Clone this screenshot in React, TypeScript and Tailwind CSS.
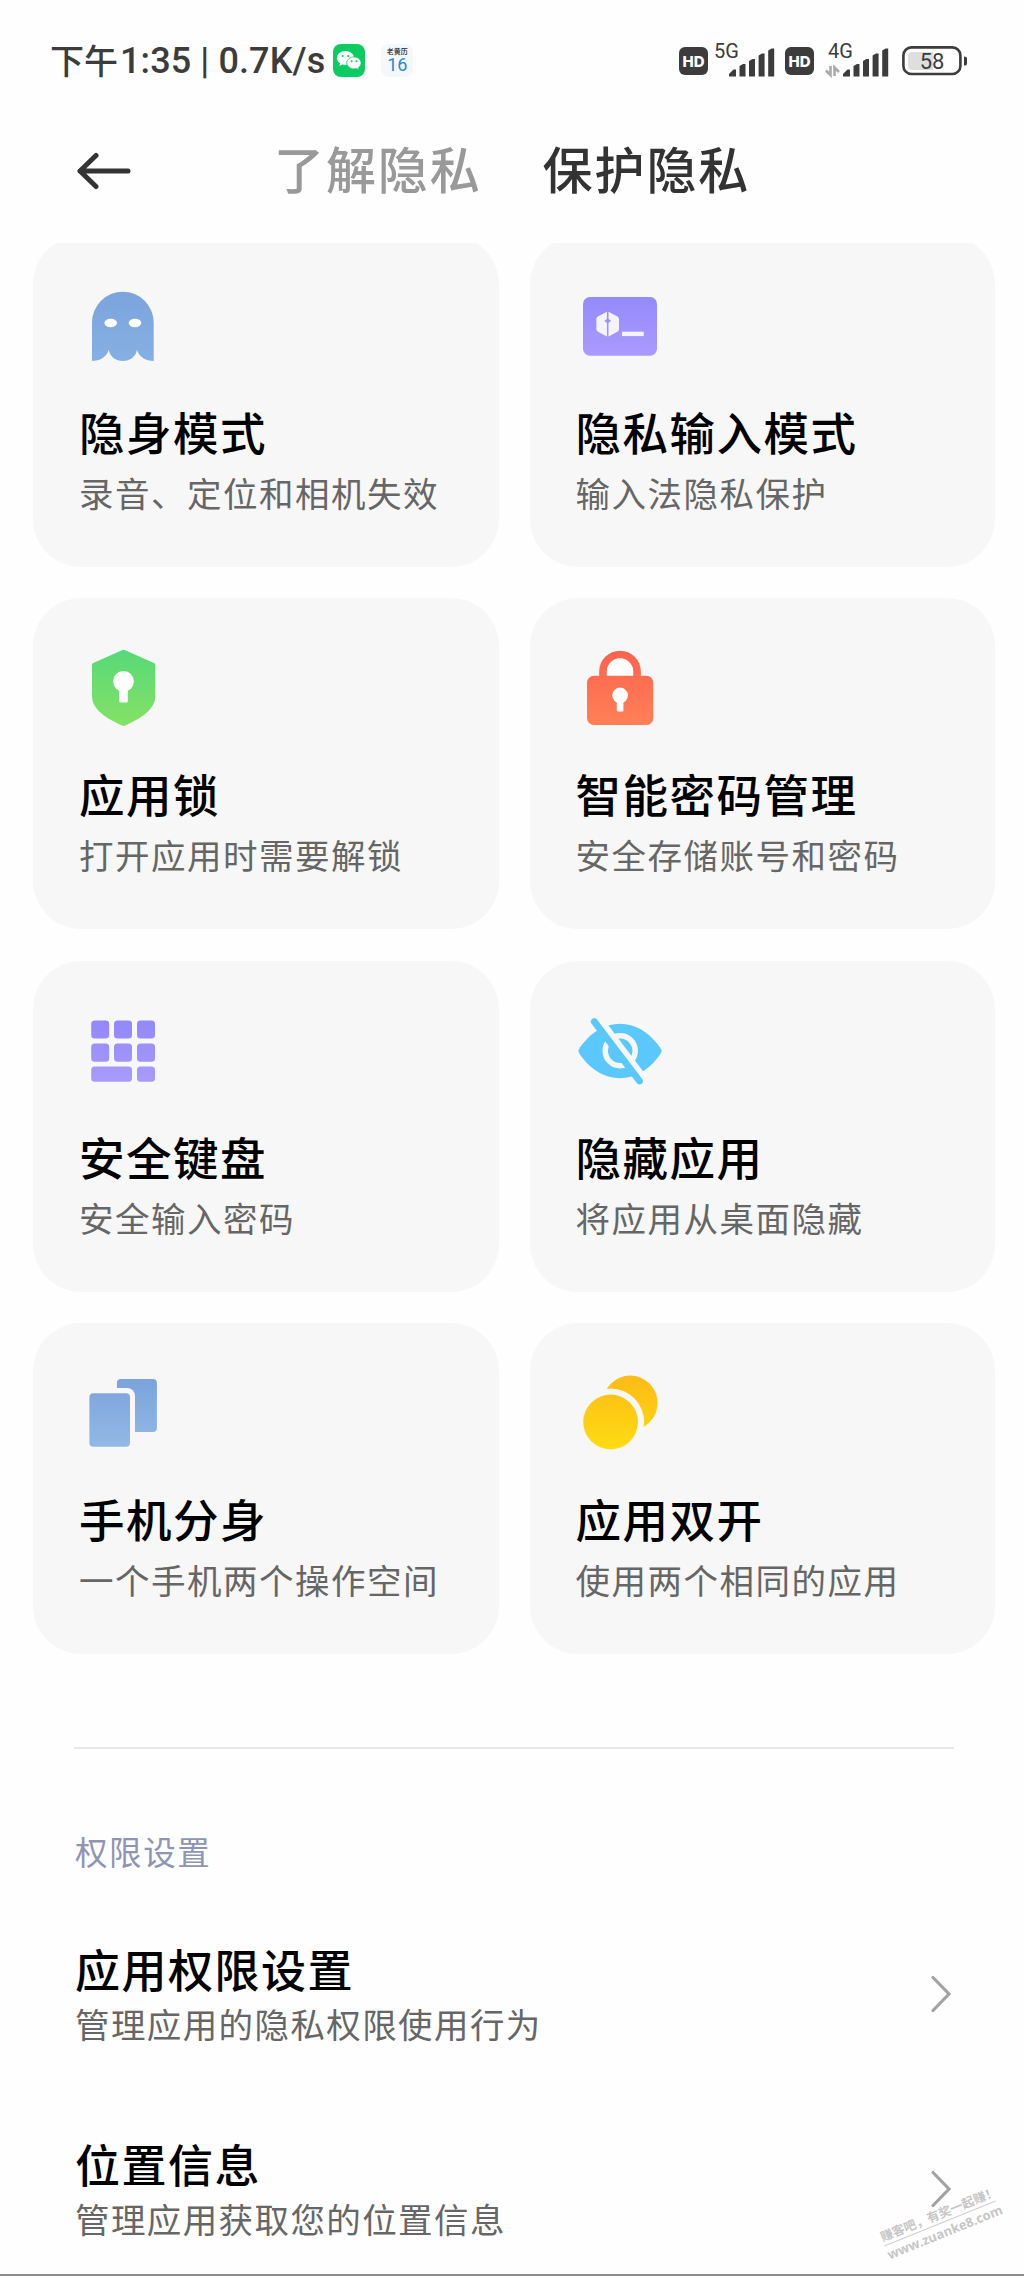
import type { ReactNode } from 'react';

const CARD_BG = '#f7f7f7';

function Gradient({ id, from, to }: { id: string; from: string; to: string }) {
  return (
    <linearGradient id={id} x1="0" y1="12" x2="0" y2="86" gradientUnits="userSpaceOnUse">
      <stop offset="0" stopColor={from} />
      <stop offset="1" stopColor={to} />
    </linearGradient>
  );
}

function CardIcon({ children }: { children: ReactNode }) {
  return (
    <svg width="100" height="100" viewBox="0 0 100 100" className="ml-3 block">
      {children}
    </svg>
  );
}

function GhostIcon() {
  return (
    <CardIcon>
      <Gradient id="ghost" from="#7ba3dd" to="#86b0e2" />
      <path
        d="M14 85V46.500a30.850 30.850 0 0 1 61.700 0V85c-8 0-14-3.500-16.700-11c-1.500 7-7 11-14.100 11s-12.700-4-14.200-11c-2.700 7.500-8.700 11-16.700 11z"
        fill="url(#ghost)"
      />
      <ellipse cx="32.700" cy="47" rx="6.300" ry="4.200" fill="#fff" />
      <ellipse cx="57" cy="47" rx="6.300" ry="4.200" fill="#fff" />
    </CardIcon>
  );
}

function PrivateInputIcon() {
  return (
    <CardIcon>
      <Gradient id="input" from="#9188fb" to="#ad9bff" />
      <rect x="8" y="21" width="74" height="58.700" rx="7" fill="url(#input)" />
      <path d="M31.900 35.700L23.300 40.200Q21.300 41.200 21.300 43V53.300Q21.300 55.100 23.300 56.100L31.900 60.500V47L29.300 44.700L31.900 43z" fill="#f5f3ff" />
      <path d="M33.500 35.700L42 40.200Q44 41.200 44 43V53.300Q44 55.100 42 56.100L33.500 60.500V47L36.100 44.700L33.500 43z" fill="#f5f3ff" />
      <rect x="47" y="55.700" width="21.700" height="4.400" fill="#f5f3ff" />
    </CardIcon>
  );
}

function ShieldIcon() {
  return (
    <CardIcon>
      <Gradient id="shield" from="#57d978" to="#84e166" />
      <path
        d="M44 12.200Q45.600 11.400 47.200 12.200L76 25Q77.300 25.600 77.300 27V58C77.300 71 64 80 47.300 87.400Q45.600 88.200 43.900 87.400C27.300 80 14 71 14 58V27Q14 25.600 15.300 25z"
        fill="url(#shield)"
      />
      <circle cx="45.500" cy="43.300" r="10.400" fill="#fff" />
      <rect x="41.200" y="48" width="8.600" height="16.600" rx="1.500" fill="#fff" />
    </CardIcon>
  );
}

function LockIcon() {
  return (
    <CardIcon>
      <Gradient id="lock" from="#fd624e" to="#ff8056" />
      <path d="M28 42V33.500a17 17 0 0 1 34 0V42" fill="none" stroke="url(#lock)" strokeWidth="7.700" />
      <path d="M31.850 37.700V33.700a13.150 13.150 0 0 1 26.300 0V37.700z" fill="#fff" />
      <rect x="12" y="37.700" width="66.300" height="49.400" rx="7" fill="url(#lock)" />
      <circle cx="45.100" cy="57.400" r="7.800" fill="#fff" />
      <rect x="41.800" y="60" width="6.600" height="13.500" rx="1" fill="#fff" />
    </CardIcon>
  );
}

function KeypadIcon() {
  return (
    <CardIcon>
      <Gradient id="keypad" from="#9085fa" to="#aa9cfd" />
      <g fill="url(#keypad)">
        {[19.4, 42.5].map((y) =>
          [13.2, 36, 59].map((x) => (
            <rect key={`${x}-${y}`} x={x} y={y} width="18" height="18.200" rx="3.500" />
          ))
        )}
        <rect x="13.200" y="65.500" width="40.800" height="15.200" rx="3.500" />
        <rect x="59" y="65.500" width="18" height="15.200" rx="3.500" />
      </g>
    </CardIcon>
  );
}

function HiddenIcon() {
  return (
    <CardIcon>
      <path
        d="M3.300 49.800Q4 46.500 8 42.500C17 31 30 22.700 45 22.700S73 31 82 42.500Q86 46.500 86.700 49.800Q86 53 82 57.500C73 69 60 77.200 45 77.200S17 69 8 57.500Q4 53 3.300 49.800z"
        fill="#5ac8fd"
      />
      <circle cx="45.200" cy="49.800" r="15" fill="none" stroke={CARD_BG} strokeWidth="5.500" />
      <path d="M23 15.500L72 80.500" stroke={CARD_BG} strokeWidth="6" />
      <path d="M19.300 20.600L64.500 80" stroke="#5ac8fd" strokeWidth="6.800" strokeLinecap="round" />
    </CardIcon>
  );
}

function CloneIcon() {
  return (
    <CardIcon>
      <Gradient id="clone" from="#7aa2dc" to="#93b9e4" />
      <rect x="38.900" y="16" width="40" height="53" rx="4" fill="url(#clone)" />
      <rect x="6" y="25" width="51" height="64" rx="8" fill={CARD_BG} />
      <rect x="11.400" y="30.300" width="40.600" height="53.400" rx="4" fill="url(#clone)" />
    </CardIcon>
  );
}

function DualAppIcon() {
  return (
    <CardIcon>
      <Gradient id="dual" from="#fdba16" to="#fddc12" />
      <circle cx="55.200" cy="40" r="27.400" fill="url(#dual)" />
      <circle cx="35.600" cy="59" r="33.500" fill={CARD_BG} />
      <circle cx="35.600" cy="59" r="27.400" fill="url(#dual)" />
    </CardIcon>
  );
}

const features = [
  { title: '隐身模式', desc: '录音、定位和相机失效', icon: <GhostIcon /> },
  { title: '隐私输入模式', desc: '输入法隐私保护', icon: <PrivateInputIcon /> },
  { title: '应用锁', desc: '打开应用时需要解锁', icon: <ShieldIcon /> },
  { title: '智能密码管理', desc: '安全存储账号和密码', icon: <LockIcon /> },
  { title: '安全键盘', desc: '安全输入密码', icon: <KeypadIcon /> },
  { title: '隐藏应用', desc: '将应用从桌面隐藏', icon: <HiddenIcon /> },
  { title: '手机分身', desc: '一个手机两个操作空间', icon: <CloneIcon /> },
  { title: '应用双开', desc: '使用两个相同的应用', icon: <DualAppIcon /> },
];

const settings = [
  { title: '应用权限设置', desc: '管理应用的隐私权限使用行为' },
  { title: '位置信息', desc: '管理应用获取您的位置信息' },
];

function WechatIcon() {
  return (
    <svg width="32" height="33" viewBox="0 0 32 33" className="ml-[8px]">
      <rect width="32" height="33" rx="8" fill="#0bcb61" />
      <path d="M12.500 7C7.700 7 4 10 4 13.900c0 2.200 1.200 4.100 3 5.400l-.8 2.700 3.200-1.600c1 .3 2 .4 3.100.4 4.800 0 8.500-3 8.500-6.900S17.300 7 12.500 7z" fill="#fff" />
      <path d="M21 12.900c-4 0-7.200 2.700-7.200 6s3.200 6 7.200 6c.9 0 1.800-.1 2.600-.4l2.500 1.400-.6-2.300c1.600-1.100 2.600-2.800 2.600-4.700 0-3.300-3.100-6-7.100-6z" fill="#fff" stroke="#0bcb61" strokeWidth=".8" />
      <g fill="#0bcb61">
        <circle cx="9.700" cy="12" r="1.100" />
        <circle cx="15.300" cy="12" r="1.100" />
        <circle cx="18.700" cy="17.300" r="1" />
        <circle cx="23.400" cy="17.300" r="1" />
      </g>
    </svg>
  );
}

function HdBadge() {
  return (
    <svg width="29" height="28" viewBox="0 0 29 28">
      <rect width="29" height="28" rx="6" fill="#3c3c3c" />
      <text x="14.500" y="19.500" textAnchor="middle" fontSize="15" fontWeight="800" fontFamily="Inter, sans-serif" textLength="22" fill="#fff">
        HD
      </text>
    </svg>
  );
}

function Signal({ label, data }: { label: string; data?: boolean }) {
  return (
    <svg width="64" height="38" viewBox="0 -2 64 38" className="overflow-visible">
      <text x={data ? 3 : 0} y="16" fontSize="20" fontFamily="Roboto, sans-serif" fill="#3c3c3c">
        {label}
      </text>
      {data && (
        <path d="M1 28.500L5.500 33V24M9.500 34V25.500L14 30" fill="none" stroke="#aaa" strokeWidth="2.600" />
      )}
      <g fill="#3c3c3c" transform={data ? undefined : 'translate(-3 0)'}>
        <path d="M18 34.500V32L22.500 27.500H25V34.500z" />
        <path d="M28.500 34.500V24L32 22H34.500V34.500z" />
        <path d="M38 34.500V19L41.500 17H44V34.500z" />
        <path d="M47.600 34.500V13.500L51 11.500H53.600V34.500z" />
        <path d="M57.200 34.500V8.500L60.700 6.500H63.200V34.500z" />
      </g>
    </svg>
  );
}

function Battery() {
  return (
    <svg width="66" height="30" viewBox="0 0 66 30">
      <rect x="1.400" y="1.400" width="57" height="26.600" rx="8" fill="none" stroke="#3c3c3c" strokeWidth="2.600" />
      <path d="M10 6H31V24H10Q6 24 6 20V10Q6 6 10 6z" fill="#dedede" />
      <path d="M62 10.500Q65 10.500 65 12.500V17.500Q65 19.500 62 19.500z" fill="#3c3c3c" />
      <text x="30" y="22.500" textAnchor="middle" fontSize="22" fontFamily="Roboto, sans-serif" fill="#3c3c3c">
        58
      </text>
    </svg>
  );
}

function StatusBar() {
  return (
    <div className="flex h-[121px] items-center justify-between pl-[50px] pr-[56px] text-[#3c3c3c]">
      <div className="flex items-center">
        <span className="-mt-[2px] text-[34px] font-medium leading-none">下午</span>
        <span className="ml-[2px] whitespace-pre font-[Roboto] text-[36px] font-medium leading-none tracking-[0.100px]">1:35 | 0.7K/s</span>
        <WechatIcon />
        <div className="ml-[16px] flex h-[33px] w-[32px] flex-col items-center rounded-lg bg-[#f3f8fb] pt-[3px] leading-none">
          <span className="text-[7px] font-medium leading-[9px] text-[#222]">老黄历</span>
          <span className="font-[Roboto] text-[18px] leading-[17px] text-[#2a8ccc]">16</span>
        </div>
      </div>
      <div className="flex items-center">
        <HdBadge />
        <div className="-mt-[4px] ml-[6px]">
          <Signal label="5G" />
        </div>
        <div className="ml-[7px]">
          <HdBadge />
        </div>
        <div className="-mt-[4px] ml-[11px]">
          <Signal label="4G" data />
        </div>
        <div className="ml-[13px]">
          <Battery />
        </div>
      </div>
    </div>
  );
}

function Header() {
  return (
    <header className="flex h-[122px] items-start pl-[77px] pt-[14px]">
      <svg width="54" height="38" viewBox="0 0 54 38" className="mt-[17px]" fill="none" stroke="#333" strokeWidth="5" strokeLinecap="round" strokeLinejoin="round">
        <path d="M51 19H3M19 3.500L3 19L19 34.500" />
      </svg>
      <nav className="ml-[143px] flex gap-[61px] text-[50px] font-medium leading-[64px] tracking-[1.900px]">
        <span className="text-[#999]">了解隐私</span>
        <span className="text-[#333]">保护隐私</span>
      </nav>
    </header>
  );
}

export default function App() {
  return (
    <div className="flex h-[2276px] w-[1024px] flex-col overflow-hidden border-b-2 border-[#8d8d8d] bg-[#fefefe] font-['Noto_Sans_CJK_SC',sans-serif]">
      <StatusBar />
      <Header />

      <main className="relative flex-1 overflow-hidden">
        <div className="-mt-[7px] grid grid-cols-2 gap-x-[31px] gap-y-[31.300px] pl-[33px] pr-[29px]">
          {features.map((item) => (
            <section key={item.title} className="h-[331px] rounded-[48px] bg-[#f7f7f7] pl-[33px] pt-10">
              {item.icon}
              <div className="pl-[13px]">
                <h2 className="mt-[25px] text-[45.500px] font-medium leading-[60px] tracking-[1.500px] text-black">{item.title}</h2>
                <p className="mt-[9px] text-[34.500px] leading-[44px] tracking-[1.500px] text-[#666]">{item.desc}</p>
              </div>
            </section>
          ))}
        </div>

        <div className="ml-[74px] mr-[70px] mt-[93px] h-[2px] bg-[#e8e8e8]" />

        <h3 className="ml-[75px] mt-[80px] text-[32.500px] leading-[44px] tracking-[1.600px] text-[#8f94b2]">权限设置</h3>

        <div className="mt-[22px]">
          {settings.map((item) => (
            <div key={item.title} className="flex h-[194.500px] items-center justify-between pl-[75px] pr-[72px]">
              <div>
                <h2 className="text-[45px] font-medium leading-[60px] tracking-[1.500px] text-black">{item.title}</h2>
                <p className="mt-[2px] text-[34.500px] leading-[44px] tracking-[1.400px] text-[#666]">{item.desc}</p>
              </div>
              <svg width="22" height="40" viewBox="0 0 22 40" className="mt-[4px]" fill="none" stroke="#a3a3a3" strokeWidth="3.200" strokeLinecap="round">
                <path d="M3 3.500L19 20L3 36.500" />
              </svg>
            </div>
          ))}
        </div>

        {/* Watermark */}
        <div className="absolute bottom-[32px] left-[880px] w-[120px] -rotate-[22deg] text-[#c6c6c6]">
          <p className="whitespace-nowrap border-b border-[#cfcfcf] text-[12.500px] font-bold leading-[18px]">赚客吧，有奖一起赚！</p>
          <p className="whitespace-nowrap font-['Open_Sans'] text-[13px] font-bold leading-[18px]">www.zuanke8.com</p>
        </div>
      </main>
    </div>
  );
}
